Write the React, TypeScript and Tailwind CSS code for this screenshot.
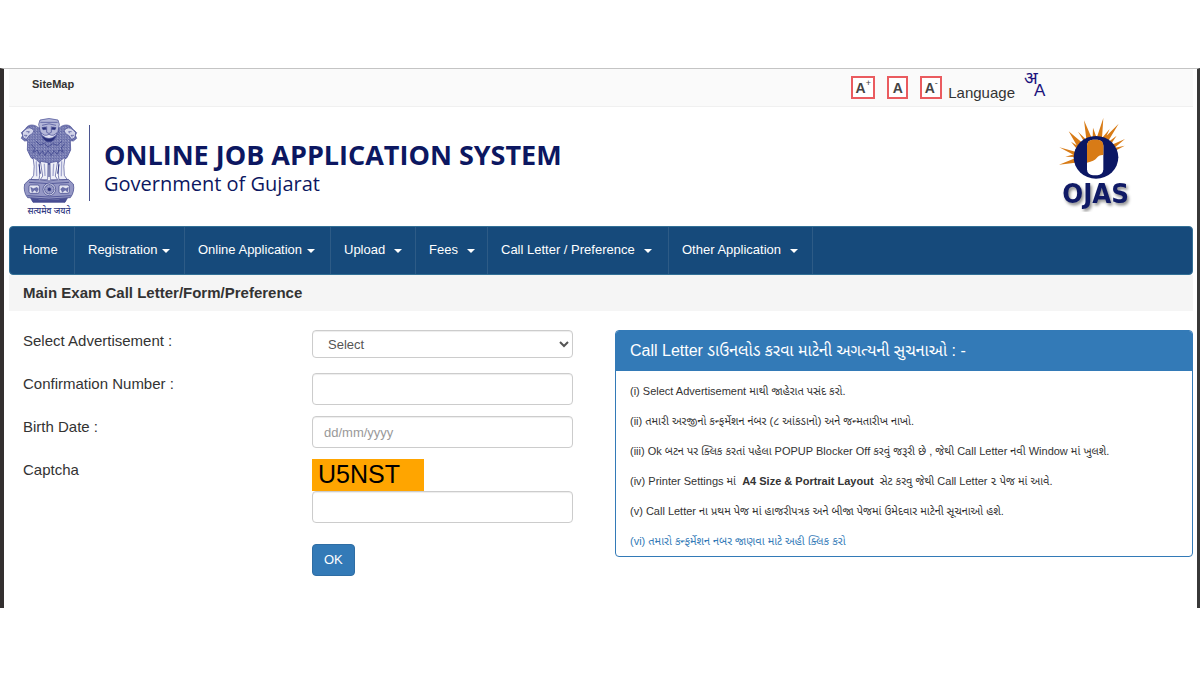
import clsx from 'clsx'

const NAV_ITEMS = [
  { label: 'Home', width: 'w-[65px]', caret: false, spaced: false },
  { label: 'Registration', width: 'w-[110px]', caret: true, spaced: false },
  { label: 'Online Application', width: 'w-[146px]', caret: true, spaced: false },
  { label: 'Upload', width: 'w-[85px]', caret: true, spaced: true },
  { label: 'Fees', width: 'w-[72px]', caret: true, spaced: true },
  { label: 'Call Letter / Preference', width: 'w-[181px]', caret: true, spaced: true },
  { label: 'Other Application', width: 'w-[144px]', caret: true, spaced: true },
]

const FIELD =
  'block w-full rounded border border-[#ccc] bg-white px-[11px] text-[13px] text-[#555] shadow-[inset_0_1px_1px_rgba(0,0,0,0.075)] placeholder:text-[#999]'

function Emblem() {
  return (
    <svg viewBox="0 0 174 300" className="h-[100px] w-[58px] shrink-0" role="img" aria-label="State Emblem of India">
      <defs>
        <pattern id="fur" width="8" height="8" patternUnits="userSpaceOnUse">
          <rect width="8" height="8" fill="#8b90c0" />
          <path d="M0 2l3 3 3-4M4 8l2-3 2 2" stroke="#343b86" strokeWidth="1.6" fill="none" />
          <circle cx="2" cy="7" r="1" fill="#dfe1f2" />
        </pattern>
      </defs>
      <g stroke="#3f4590" strokeWidth="2" strokeLinejoin="round">
        <path d="M55 32C42 20 23 22 17 35L4 47l4 8-4 9 10 8 9-1-1 28 11 23 24 14 30 6 30-6 24-14 11-23-1-28 9 1 10-8-4-9 4-8-13-12c-6-13-25-15-38-3z" fill="url(#fur)" />
        <path d="M14 39q16-14 28 2-4 12-14 14l-9 12-9-4-2-8-1-8zM160 39q-16-14-28 2 4 12 14 14l9 12 9-4 2-8 1-8z" fill="#d3d5ea" />
        <path d="M60 9q27-9 54 0l4 13-5 27-10 19H72L62 50l-6-28z" fill="#b4b7d8" />
        <path d="M61 16h52M66 25q21-9 42 0M80 28v18q7 7 14 0V28" fill="none" />
        <path d="M66 32l11-2 2 7-10 1zM97 30l11 2-3 6-10-1z" fill="#293078" />
        <path d="M64 47q9 13 23 5 14 8 23-5-3 25-23 25T64 47z" fill="#dfe1f2" />
        <path d="M67 56q20 17 40 0-4 18-20 18T67 56z" fill="#262d78" />
        <path d="M19 44h9l-3 5M12 55h9l-5 6M155 44h-9l3 5M162 55h-9l5 6" fill="none" />
      </g>
      <path d="M34 82l10 12-5 12 14-6 5 13 9-11 8 13 9-14 10 14 8-14 10 11 5-13 13 7-6-13 10-13M48 72l12 12 13-5 11 11 14-10 14 5 14-13" stroke="#343b86" strokeWidth="2" fill="none" />
      <g stroke="#3f4590" strokeWidth="2" fill="#eff0f8">
        <path d="M39 120q6 28 2 55l-9 13h25l2-12-1-40zM61 133l7 44-7 11h22l1-51zM90 137l1 51h22l-7-11 7-44zM116 136l-1 40 2 12h25l-9-13q-4-27 2-55z" />
        <path d="M49 133l1 45M73 140l2 37M101 140l-2 37M125 133l-1 45" fill="none" stroke="#a3a7cf" strokeWidth="4" />
        <path d="M57 142l4 28M87 139v41M117 142l-4 28" fill="none" stroke="#2c337e" strokeWidth="3" />
      </g>
      <g stroke="#363d85" strokeWidth="2">
        <path d="M29 187q58 9 116 0l15 14q5 23-9 41-65 8-128 0-14-17-9-41z" fill="#9598c5" />
        <path d="M27 196q60 8 120 0M22 236q65 8 130 0" fill="none" />
        <rect x="27" y="204" width="31" height="25" rx="5" fill="#e6e7f3" />
        <rect x="117" y="204" width="31" height="25" rx="5" fill="#e6e7f3" />
        <path d="M32 211l8 4 11-4 4 5-4 10-7-7-8 7zM122 216l6-5 10 4 7-4-2 15-7-7-9 7z" fill="#6c71ac" strokeWidth="1" />
        <circle cx="88" cy="217" r="19" fill="#d8daeb" />
        <circle cx="88" cy="217" r="14" fill="#b5b8d9" />
        <path d="M88 201v32M72 217h32M77 206l22 22M77 228l22-22M81 203l14 28M74 210l28 14M74 224l28-14M81 231l14-28" strokeWidth="1" />
        <circle cx="88" cy="217" r="4" fill="#30377f" />
        <path d="M32 244q55 7 110 0l-7 12H39z" fill="#4a5095" />
      </g>
      <text x="87" y="290" textAnchor="middle" fontSize="26" fontWeight="500" fill="#30377f" fontFamily="'Noto Sans', 'Noto Sans Devanagari', sans-serif">
        सत्यमेव जयते
      </text>
    </svg>
  )
}

function OjasLogo() {
  return (
    <svg viewBox="85 38 225 285" className="h-[95px] w-[75px] shrink-0" role="img" aria-label="OJAS">
      <g fill="#d87b16">
        <path d="M88 181l50-20-1 14zM89 129l48 13-3 11z" />
        <path d="M117 81l39 33-12 14zM124 112l25 16-5 9zM107 157l29-8-1 9z" />
        <path d="M163 48l22 51-15 5zM145 82l25 24-7 5zM190 70l10 28-11 1z" />
        <path d="M221 41l-4 61-15-4zM267 58l-33 55-13-9zM240 74l-14 31-9-4z" />
        <path d="M286 104l-33 28-8-10zM261 94l-17 25-8-6zM285 124l-25 14-4-8z" />
      </g>
      <ellipse cx="199" cy="159" rx="67" ry="64" fill="#0b1764" />
      <rect x="172" y="106" width="49" height="107" rx="18" fill="#fff" />
      <path d="M172 175v-51q0-18 18-18h13q18 0 18 18v28q-13-1-20 9t-29 14z" fill="#d87b16" />
      <text
        x="198"
        y="295"
        textAnchor="middle"
        fontSize="82"
        fontWeight="700"
        fill="#101a66"
        fontFamily="'DejaVu Sans Condensed', 'DejaVu Sans', sans-serif"
        className="drop-shadow-[5px_7px_4px_rgba(0,0,0,0.45)]"
      >
        OJAS
      </text>
    </svg>
  )
}

function TopBar() {
  const box = 'mt-[7px] flex h-[23px] items-center justify-center border-2 border-[#ea5b5f] bg-white text-sm font-bold text-[#444]'
  return (
    <div className="flex h-[38px] items-start justify-between border-b border-[#f0f0f0] bg-[#fafafa] pr-[145px] pl-[23px]">
      <a href="#sitemap" className="pt-[7px] text-[11px] leading-4 font-bold">SiteMap</a>
      <div className="flex items-start">
        <button type="button" aria-label="Increase text size" className={clsx(box, 'mr-3 w-6')}>
          A<sup className="text-[9px] font-normal">+</sup>
        </button>
        <button type="button" aria-label="Normal text size" className={clsx(box, 'mr-3 w-[21px]')}>A</button>
        <button type="button" aria-label="Decrease text size" className={clsx(box, 'mr-[6px] w-[22px]')}>
          A<sup className="text-[9px] font-normal">-</sup>
        </button>
        <span className="mt-[14px] text-[15px] leading-5">Language</span>
        <button type="button" aria-label="Change language" className="ml-[9px]">
          <svg viewBox="0 0 24 30" className="h-[30px] w-6 overflow-visible" fill="#1b127c">
            <text x="0" y="15" fontSize="18" fontFamily="'Noto Sans', 'Noto Sans Devanagari', sans-serif">अ</text>
            <text x="10" y="27" fontSize="17" fontFamily="'Liberation Sans', Arial, sans-serif">A</text>
          </svg>
        </button>
      </div>
    </div>
  )
}

function NavBar() {
  return (
    <nav className="rounded border border-[#337096] bg-[#164a7b] text-[13px] text-white">
      <ul className="flex h-[47px]">
        {NAV_ITEMS.map((item) => (
          <li key={item.label} className={clsx('shrink-0 border-r border-[#2d5b86]', item.width)}>
            <a href="#menu" className="flex h-[46px] items-center pl-[13px] whitespace-nowrap">
              {item.label}
              {item.caret && (
                <span
                  className={clsx(
                    'mt-[2px] border-x-4 border-t-4 border-x-transparent border-t-white',
                    item.spaced ? 'ml-[9px]' : 'ml-[5px]'
                  )}
                />
              )}
            </a>
          </li>
        ))}
      </ul>
    </nav>
  )
}

function CallLetterForm() {
  const row = 'grid min-h-[43px] grid-cols-[289fr_261fr] items-start'
  const label = 'text-[15px] leading-[21px]'
  return (
    <form className="pr-[42px] pl-[14px]" onSubmit={(e) => e.preventDefault()}>
      <div className={row}>
        <label htmlFor="advertisement" className={label}>Select Advertisement :</label>
        <select id="advertisement" className={clsx(FIELD, 'h-7 pr-0')}>
          <option>Select</option>
        </select>
      </div>
      <div className={row}>
        <label htmlFor="confirmation" className={label}>Confirmation Number :</label>
        <input id="confirmation" type="text" className={clsx(FIELD, 'h-8')} />
      </div>
      <div className={row}>
        <label htmlFor="birth-date" className={label}>Birth Date :</label>
        <input id="birth-date" type="text" placeholder="dd/mm/yyyy" className={clsx(FIELD, 'h-8')} />
      </div>
      <div className={row}>
        <label htmlFor="captcha" className={label}>Captcha</label>
        <div>
          <div className="h-8 w-28 bg-[#ffa500] pl-[6px] text-[25px] leading-[30px] text-black">U5NST</div>
          <input id="captcha" type="text" className={clsx(FIELD, 'h-8')} />
          <button type="submit" className="mt-[21px] h-8 rounded border border-[#2e6da4] bg-[#337ab7] px-[11px] text-[13px] text-white">
            OK
          </button>
        </div>
      </div>
    </form>
  )
}

function Instructions() {
  return (
    <section className="overflow-hidden rounded border border-[#337ab7]">
      <h2 className="bg-[#337ab7] px-[14px] text-base leading-10 text-white">
        Call Letter ડાઉનલોડ કરવા માટેની અગત્યની સુચનાઓ : -
      </h2>
      <div className="flex flex-col gap-3 px-[14px] pt-[11px] pb-[6px] text-[11px] leading-[18px]">
        <p>(i) Select Advertisement માથી જાહેરાત પસંદ કરો.</p>
        <p>(ii) તમારી અરજીનો કન્ફર્મેશન નંબર (૮ આંકડાનો) અને જન્મતારીખ નાખો.</p>
        <p>(iii) Ok બટન પર ક્લિક કરતાં પહેલા POPUP Blocker Off કરવું જરૂરી છે , જેથી Call Letter નવી Window માં ખુલશે.</p>
        <p>
          (iv) Printer Settings માં &nbsp;<b>A4 Size &amp; Portrait Layout</b>&nbsp; સેટ કરવુ જેથી Call Letter ૨ પેજ માં આવે.
        </p>
        <p>(v) Call Letter ના પ્રથમ પેજ માં હાજરીપત્રક અને બીજા પેજમાં ઉમેદવાર માટેની સૂચનાઓ હશે.</p>
        <a href="#confirmation-number" className="text-[#337ab7]">(vi) તમારો કન્ફર્મેશન નબર જાણવા માટે અહી ક્લિક કરો</a>
      </div>
    </section>
  )
}

export default function App() {
  return (
    <div className="min-h-screen bg-white py-[68px] font-['Liberation_Sans',Arial,'Noto_Sans_Gujarati','Noto_Sans',sans-serif] text-[#333]">
      <div className="border-t border-r-[3px] border-l-4 border-t-[#c4c4c4] border-r-[#383838] border-l-[#332f2f] pr-1 pb-8 pl-[5px]">
        <TopBar />
        <header className="flex h-[119px] items-start justify-between pt-[10px] pr-[60px] pl-[11px]">
          <div className="flex items-start">
            <Emblem />
            <div className="mt-2 ml-[11px] border-l border-[#4b5590] pt-[14px] pb-[4px] pl-[14px] font-['Open_Sans','Noto_Sans',sans-serif] text-[#0c1761]">
              <h1 className="text-[27px] leading-8 font-bold">ONLINE JOB APPLICATION SYSTEM</h1>
              <p className="text-xl leading-[26px]">Government of Gujarat</p>
            </div>
          </div>
          <OjasLogo />
        </header>
        <NavBar />
        <h2 className="bg-[#f5f5f5] pl-[14px] text-[15px] leading-9 font-bold">Main Exam Call Letter/Form/Preference</h2>
        <main className="grid grid-cols-[606fr_578fr] items-start pt-[19px]">
          <CallLetterForm />
          <Instructions />
        </main>
      </div>
    </div>
  )
}
